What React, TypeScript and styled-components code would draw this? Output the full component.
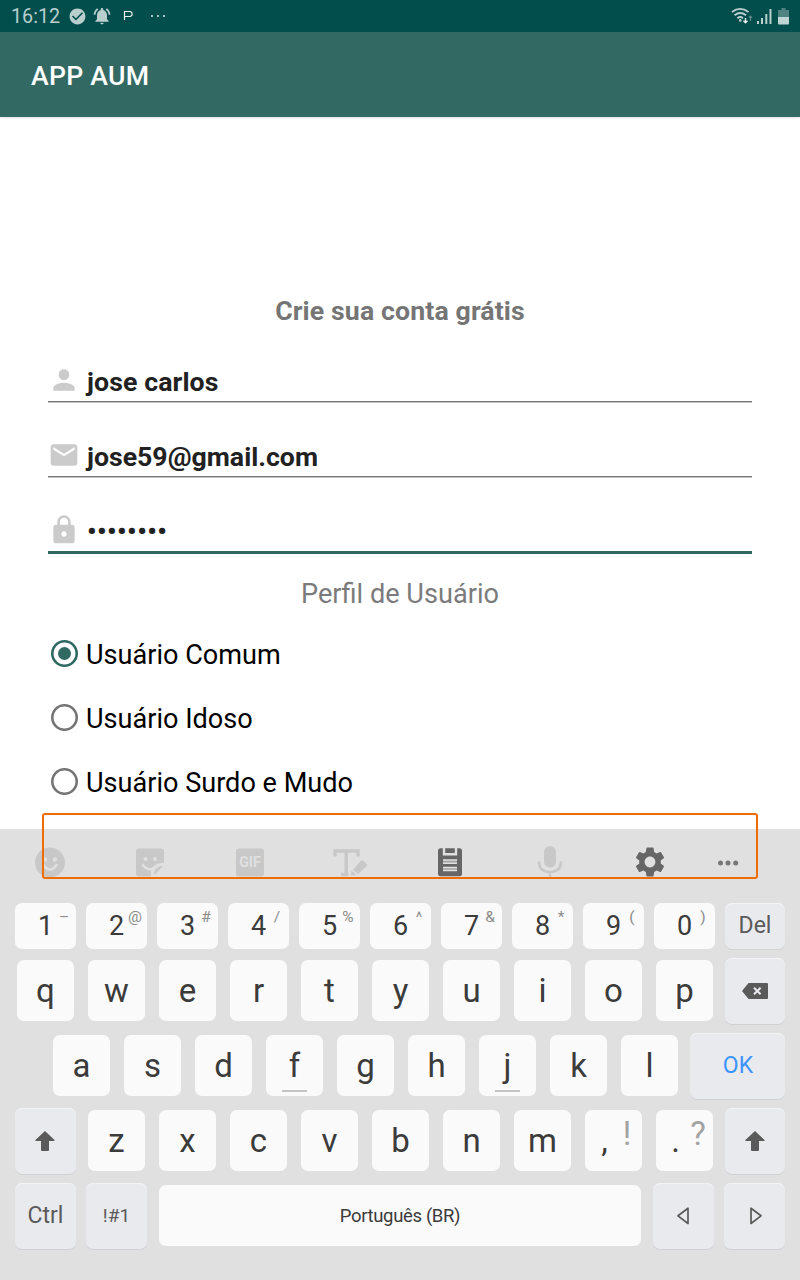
import React from 'react';
import styled, { createGlobalStyle } from 'styled-components';
import { MdPerson, MdEmail, MdLock, MdSettings, MdCheckCircle, MdNotificationsActive } from 'react-icons/md';

const GlobalStyle = createGlobalStyle`
  * { box-sizing: border-box; }
  body { margin: 0; background: #fff; font-family: Roboto, sans-serif; }
  svg { display: block; flex: none; }
`;

const Screen = styled.div`
  position: relative;
  display: flex;
  flex-direction: column;
  width: 800px;
  height: 1280px;
  overflow: hidden;
  background: #fff;
`;

const StatusBar = styled.header`
  display: flex;
  align-items: center;
  height: 32px;
  padding: 0 11px 0 11px;
  background: #024e4d;
  color: #b8cfce;
`;

const Clock = styled.span`
  width: 57px;
  font-size: 19.7px;
  line-height: 32px;
  padding-top: 2px;
`;

const StatusIcons = styled.div<{ $gap: number; $end?: boolean }>`
  display: flex;
  align-items: center;
  gap: ${(p) => p.$gap}px;
  margin-left: ${(p) => (p.$end ? 'auto' : '0')};
`;

const AppBar = styled.div`
  height: 85px;
  padding-left: 31px;
  background: #336963;
  color: #fff;
  font-size: 26.67px;
  font-weight: 500;
  letter-spacing: 0.25px;
  line-height: 89px;
  box-shadow: 0 1px 2px rgba(0, 0, 0, 0.12);
`;

const Form = styled.main`
  display: flex;
  flex-direction: column;
  height: 712px;
  padding: 178px 48px 0;
`;

const Heading = styled.h1`
  margin: 0;
  height: 32px;
  font-size: 26.67px;
  font-weight: 700;
  letter-spacing: 0.12px;
  line-height: 32px;
  text-align: center;
  color: #757575;
`;

const Field = styled.label<{ $focused?: boolean }>`
  display: flex;
  align-items: flex-start;
  gap: 7px;
  height: ${(p) => (p.$focused ? 40 : 38)}px;
  margin-top: 37px;
  border-bottom: ${(p) => (p.$focused ? '3px solid #306962' : '1px solid #757575')};
  box-shadow: ${(p) => (p.$focused ? 'none' : '0 1px 0 #c4c4c4')};
  color: #cbcbcb;
`;

const FieldText = styled.span<{ $spacing?: number; $line?: number }>`
  font-size: 26.67px;
  font-weight: 700;
  line-height: ${(p) => p.$line ?? 37}px;
  letter-spacing: ${(p) => p.$spacing ?? 0}px;
  color: #212121;
`;

const Subheading = styled.h2`
  margin: 24px 0 0;
  font-size: 27.15px;
  font-weight: 400;
  line-height: 32px;
  text-align: center;
  color: #7b7b7b;
`;

const Options = styled.div`
  display: flex;
  flex-direction: column;
  margin-top: 11px;
`;

const Option = styled.div`
  display: flex;
  align-items: center;
  gap: 8px;
  height: 64px;
  padding-left: 3px;
  font-size: 27.1px;
  line-height: 32px;
  color: #000;
`;

const RadioMark = styled.span<{ $on?: boolean }>`
  display: grid;
  place-items: center;
  width: 27px;
  height: 27px;
  border-radius: 50%;
  box-shadow: inset 0 0 0 2.6px ${(p) => (p.$on ? '#306962' : '#757575')};
  &::after {
    content: '';
    width: 13px;
    height: 13px;
    border-radius: 50%;
    background: ${(p) => (p.$on ? '#306962' : 'transparent')};
  }
`;

const OptionText = styled.span`
  padding-top: 3px;
`;

const FocusFrame = styled.div`
  position: absolute;
  left: 42px;
  top: 813px;
  width: 716px;
  height: 66px;
  border: 2px solid #ef6c00;
  border-radius: 3px;
`;

const Keyboard = styled.section`
  display: flex;
  flex-direction: column;
  height: 451px;
  background: #e0e0e0;
`;

const Toolbar = styled.div`
  display: flex;
  height: 69px;
`;

const Tool = styled.span<{ $dim?: boolean; $width?: number; $top?: number }>`
  display: flex;
  justify-content: center;
  width: ${(p) => p.$width ?? 100}px;
  padding-top: ${(p) => p.$top ?? 16}px;
  color: ${(p) => (p.$dim ? '#c8c8c8' : '#666')};
`;

const KeyRow = styled.div<{ $height?: number; $indent?: number }>`
  display: flex;
  height: ${(p) => p.$height ?? 75}px;
  padding: 0 10px 0 ${(p) => 10 + (p.$indent ?? 0)}px;
`;

const Key = styled.span<{ $kind?: 'number' | 'letter' | 'action'; $width?: number; $size?: number; $color?: string; $spacing?: number }>`
  position: relative;
  display: flex;
  align-items: center;
  justify-content: center;
  width: ${(p) => (p.$width ?? 71) - (p.$kind === 'letter' ? 14 : 10)}px;
  margin: ${(p) => (p.$kind === 'letter' ? '7px' : '5px 5px 4px')};
  border-radius: 7px;
  background: ${(p) => (p.$kind === 'action' ? '#e9eaee' : '#fafafa')};
  box-shadow: ${(p) => (p.$kind === 'action' ? '0 1px 0 #d0d1d4, inset 0 1px 0 #f2f3f5' : 'none')};
  font-size: ${(p) => p.$size ?? 33}px;
  letter-spacing: ${(p) => p.$spacing ?? 0}px;
  line-height: 1;
  color: ${(p) => p.$color ?? (p.$kind === 'action' ? '#5a5a5a' : '#3b3b3b')};
`;

const KeyLabel = styled.span<{ $down?: number; $right?: number }>`
  padding-top: ${(p) => Math.max(p.$down ?? 0, 0) * 2}px;
  padding-bottom: ${(p) => Math.max(-(p.$down ?? 0), 0) * 2}px;
  padding-left: ${(p) => Math.max(p.$right ?? 0, 0) * 2}px;
  padding-right: ${(p) => Math.max(-(p.$right ?? 0), 0) * 2}px;
`;

const Hint = styled.span<{ $large?: boolean }>`
  position: absolute;
  top: 7px;
  right: ${(p) => (p.$large ? -1 : 0)}px;
  width: ${(p) => (p.$large ? 32 : 24)}px;
  font-size: ${(p) => (p.$large ? 33 : 15.5)}px;
  line-height: 1;
  text-align: center;
  color: ${(p) => (p.$large ? '#a3a3a3' : '#8c8c8c')};
`;

const HomeBar = styled.span`
  position: absolute;
  bottom: 4px;
  left: 16px;
  width: 25px;
  height: 2px;
  background: #c4c4c4;
`;

const ShiftIcon = () => (
  <svg width="21" height="20" viewBox="0 0 21 20" fill="#5a5a5a">
    <path d="M10 0 19.500 9q.4 1-.6 1H14v9q0 1-1 1H7q-1 0-1-1v-9H1q-1 0-.6-1Z" />
  </svg>
);

const numbers = [['1', '–'], ['2', '@'], ['3', '#'], ['4', '/'], ['5', '%'], ['6', '^'], ['7', '&'], ['8', '*'], ['9', '('], ['0', ')']];

export default function App() {
  return (
    <Screen>
      <GlobalStyle />
      <StatusBar>
        <Clock>16:12</Clock>
        <StatusIcons $gap={5}>
          <MdCheckCircle size={19} />
          <MdNotificationsActive size={20} />
          <svg width="54" height="16" viewBox="0 0 54 16">
            <path d="M7.500 12V3.500h6l1.500 1.200v2.600L13.500 8.500h-6" fill="none" stroke="#e9f1f0" strokeWidth="1.2" />
            <path d="M34 7h2v2h-2zm6 0h2v2h-2zm6 0h2v2h-2z" fill="#a9c6c5" />
          </svg>
        </StatusIcons>
        <StatusIcons $gap={4} $end>
          <svg width="22" height="18" viewBox="0 0 22 18" fill="none" stroke="currentColor" strokeWidth="1.8">
            <path d="M1 5Q9 -1.2 17.500 5M3.600 8.200Q9.200 3.700 15 8.200M6.400 11.200Q9.200 8.800 12 11.200" />
            <circle cx="9.300" cy="13.400" r="1.300" fill="currentColor" stroke="none" />
            <path d="M14.500 11v5M12.500 13.800l2 2 2-2" stroke="#e5efee" strokeWidth="1.4" />
            <path d="M19.500 14V9M18 10.700l1.500-1.500 1.500 1.500" stroke="#5b8b89" strokeWidth="1.2" />
          </svg>
          <svg width="17" height="18" viewBox="0 0 17 18" fill="currentColor">
            <path d="M0 14h2v3H0zM4 11h2v6H4zM8.300 7h2v10h-2zM12.500 2h2v15h-2z" />
          </svg>
          <svg width="11" height="18" viewBox="0 0 11 18">
            <path d="M3.500 1h4v2H11v8H0V3h3.500z" fill="#4f8280" />
            <path d="M0 10h11v6.500q0 1-1 1H1q-1 0-1-1z" fill="#bfd5d4" />
          </svg>
        </StatusIcons>
      </StatusBar>
      <AppBar>APP AUM</AppBar>

      <Form>
        <Heading>Crie sua conta grátis</Heading>
        <Field><MdPerson size={32} /><FieldText $spacing={0.1}>jose carlos</FieldText></Field>
        <Field><MdEmail size={32} /><FieldText>jose59@gmail.com</FieldText></Field>
        <Field $focused><MdLock size={32} /><FieldText $spacing={0.45} $line={35}>••••••••</FieldText></Field>
        <Subheading>Perfil de Usuário</Subheading>
        <Options>
          <Option><RadioMark $on /><OptionText>Usuário Comum</OptionText></Option>
          <Option><RadioMark /><OptionText>Usuário Idoso</OptionText></Option>
          <Option><RadioMark /><OptionText>Usuário Surdo e Mudo</OptionText></Option>
        </Options>
      </Form>

      <Keyboard>
        <Toolbar>
          <Tool $dim>
            <svg width="34" height="34" viewBox="0 0 34 34">
              <circle cx="17" cy="17.500" r="15" fill="currentColor" />
              <circle cx="12" cy="14.500" r="2.200" fill="#e0e0e0" />
              <circle cx="22" cy="14.500" r="2.200" fill="#e0e0e0" />
              <path d="M10.500 20q6.500 9 13 0" fill="none" stroke="#e0e0e0" strokeWidth="2.500" strokeLinecap="round" />
            </svg>
          </Tool>
          <Tool $dim>
            <svg width="34" height="34" viewBox="0 0 34 34">
              <path d="M6 3.500h22q3 0 3 3V18q-11-.5-13 7.500L18 31.500H6q-3 0-3-3v-22q0-3 3-3zM21 30.500q0-9 9.500-10Z" fill="currentColor" />
              <circle cx="12.500" cy="14" r="2" fill="#e0e0e0" />
              <circle cx="22" cy="14" r="2" fill="#e0e0e0" />
              <path d="M10 20q4 5.500 9.500 3.800" fill="none" stroke="#e0e0e0" strokeWidth="2.400" strokeLinecap="round" />
            </svg>
          </Tool>
          <Tool $dim>
            <svg width="34" height="34" viewBox="0 0 34 34">
              <rect x="3" y="3.500" width="28" height="28" rx="3" fill="currentColor" />
              <text x="17" y="22.300" textAnchor="middle" fontFamily="Roboto, sans-serif" fontSize="14" fontWeight="700" letterSpacing="0" fill="#e0e0e0">GIF</text>
            </svg>
          </Tool>
          <Tool $dim>
            <svg width="36" height="34" viewBox="0 0 36 34">
              <path d="M3 11.500V6h23v5.500M14.200 6v23.500M9 29.500h7.500" fill="none" stroke="currentColor" strokeWidth="3.400" />
              <path d="m21 25 8-9.500q1-1 2 0l3.600 3.600q1 1 0 2L26 29zM19.500 25.500l5 4.500-5.500.5z" fill="currentColor" />
            </svg>
          </Tool>
          <Tool>
            <svg width="34" height="34" viewBox="0 0 34 34">
              <rect x="5" y="3.300" width="24" height="28" rx="2.500" fill="currentColor" />
              <path d="M11 3v6.300h12V3" fill="none" stroke="#e0e0e0" strokeWidth="2.400" />
              <path d="M10 16.500h14M10 24h14" stroke="#a2a2a2" strokeWidth="3" />
              <path d="M10 15h14M10 18.200h14M10 22.400h14M10 25.600h14" stroke="#e0e0e0" strokeWidth="1.500" />
            </svg>
          </Tool>
          <Tool $dim>
            <svg width="34" height="34" viewBox="0 0 34 34">
              <rect x="11" y="1" width="12" height="21.500" rx="6" fill="currentColor" />
              <path d="M6 16.500q0 10.500 11 10.500t11-10.500M17 27v5.500" fill="none" stroke="currentColor" strokeWidth="2.500" />
            </svg>
          </Tool>
          <Tool $top={15}><MdSettings size={36} /></Tool>
          <Tool $width={56}>
            <svg width="24" height="34" viewBox="0 0 24 34" fill="#777">
              <circle cx="4.500" cy="18" r="2.500" />
              <circle cx="12" cy="18" r="2.500" />
              <circle cx="19.700" cy="18" r="2.500" />
            </svg>
          </Tool>
        </Toolbar>

        <KeyRow $height={55}>
          {numbers.map(([n, hint]) => (
            <Key key={n} $kind="number" $size={27}>{n}<Hint>{hint}</Hint></Key>
          ))}
          <Key $kind="action" $width={70} $size={23}><KeyLabel $down={-1}>Del</KeyLabel></Key>
        </KeyRow>
        <KeyRow>
          {[...'qwertyuiop'].map((c) => <Key key={c} $kind="letter">{c}</Key>)}
          <Key $kind="action" $width={70}>
            <svg width="28" height="17" viewBox="0 0 28 17">
              <path d="M7.500 0H26q1 0 1 1v14q0 1-1 1H7.500L1 8Z" fill="#5a5a5a" />
              <path d="m13 4.700 6.600 6.600m0-6.600-6.600 6.600" stroke="#e9eaee" strokeWidth="2" />
            </svg>
          </Key>
        </KeyRow>
        <KeyRow $indent={36}>
          {[...'asdfghjkl'].map((c) => (
            <Key key={c} $kind="letter">{c}{(c === 'f' || c === 'j') && <HomeBar />}</Key>
          ))}
          <Key $kind="action" $width={105} $size={23} $color="#3d94fb"><KeyLabel $down={-1} $right={0.5}>OK</KeyLabel></Key>
        </KeyRow>
        <KeyRow>
          <Key $kind="action"><ShiftIcon /></Key>
          {[...'zxcvbnm'].map((c) => <Key key={c} $kind="letter">{c}</Key>)}
          <Key $kind="letter"><KeyLabel $right={-9}>,</KeyLabel><Hint $large>!</Hint></Key>
          <Key $kind="letter"><KeyLabel $right={-9}>.</KeyLabel><Hint $large>?</Hint></Key>
          <Key $kind="action" $width={70}><ShiftIcon /></Key>
        </KeyRow>
        <KeyRow>
          <Key $kind="action" $size={23}><KeyLabel $down={-1}>Ctrl</KeyLabel></Key>
          <Key $kind="action" $size={19}><KeyLabel $down={-1}>!#1</KeyLabel></Key>
          <Key $kind="letter" $width={496} $size={18.5} $spacing={-0.35}><KeyLabel $down={1}>Português (BR)</KeyLabel></Key>
          <Key $kind="action">
            <svg width="16" height="18" viewBox="0 0 16 18"><path d="M12 1.200v15.300L2 8.800Z" fill="none" stroke="#5a5a5a" strokeWidth="1.700" strokeLinejoin="round" /></svg>
          </Key>
          <Key $kind="action">
            <svg width="14" height="18" viewBox="0 0 14 18"><path d="M3 1.200v15.300L13 8.800Z" fill="none" stroke="#5a5a5a" strokeWidth="1.700" strokeLinejoin="round" /></svg>
          </Key>
        </KeyRow>
      </Keyboard>
      <FocusFrame />
    </Screen>
  );
}
